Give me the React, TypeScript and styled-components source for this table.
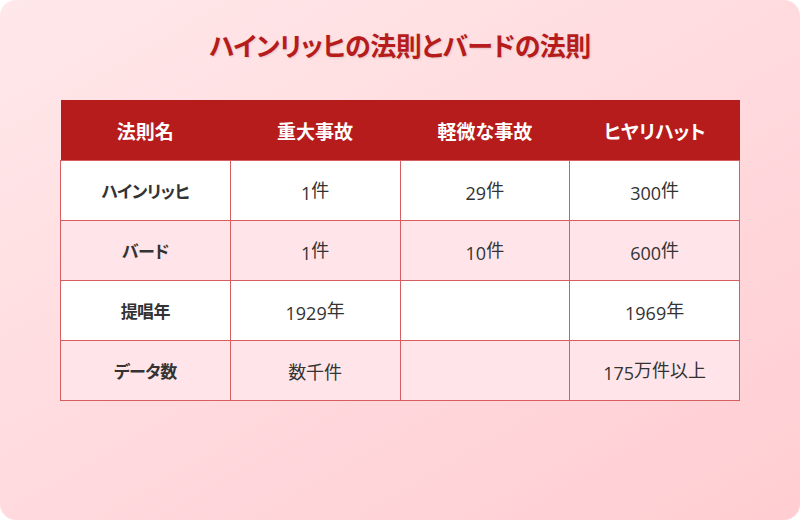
import React from 'react';
import styled, { createGlobalStyle } from 'styled-components';

const GlobalStyle = createGlobalStyle`
  html, body {
    margin: 0;
    padding: 0;
    background: #ffffff;
  }
  body {
    font-family: 'Open Sans', 'Noto Sans CJK JP', sans-serif;
  }
`;

const Card = styled.div`
  width: 800px;
  height: 520px;
  box-sizing: border-box;
  border-radius: 16px;
  background: linear-gradient(150deg, #ffe8ea 0%, #ffd9dd 55%, #ffcdd2 100%);
  padding: 24px 60px;
  display: flex;
  flex-direction: column;
  align-items: stretch;
`;

const Title = styled.h1`
  margin: 0 0 34px;
  height: 42px;
  line-height: 42px;
  text-align: center;
  font-family: 'Noto Sans CJK JP', sans-serif;
  font-feature-settings: 'palt';
  font-size: 26px;
  letter-spacing: -0.5px;
  font-weight: 700;
  color: #b71c1c;
  text-shadow: 1px 1px 2px rgba(0, 0, 0, 0.12);
`;

const Table = styled.table`
  width: 680px;
  border-collapse: collapse;
  table-layout: fixed;
`;

const HeadCell = styled.th`
  height: 60px;
  padding: 0;
  background: #b71c1c;
  color: #ffffff;
  font-family: 'Noto Sans CJK JP', sans-serif;
  font-feature-settings: 'palt';
  font-size: 19px;
  font-weight: 700;
  text-align: center;
`;

const Row = styled.tr<{ $alt?: boolean }>`
  background: ${(p) => (p.$alt ? '#ffe5e9' : '#ffffff')};
`;

const Cell = styled.td<{ $label?: boolean }>`
  height: 59px;
  padding: 0;
  border: 1px solid #d65d60;
  text-align: center;
  color: #333333;
  font-feature-settings: 'palt';
  font-size: ${(p) => (p.$label ? '17px' : '18px')};
  letter-spacing: ${(p) => (p.$label ? '-0.5px' : '0')};
  font-weight: ${(p) => (p.$label ? 700 : 400)};
  font-family: ${(p) =>
    p.$label ? "'Noto Sans CJK JP', sans-serif" : "'Open Sans', 'Noto Sans CJK JP', sans-serif"};
`;

// CJK unit after a number sits a little higher than the digits in the reference
const Unit = styled.span`
  font-family: 'Noto Sans CJK JP', sans-serif;
  vertical-align: 3px;
`;

const headers = ['法則名', '重大事故', '軽微な事故', 'ヒヤリハット'];

const rows = [
  ['ハインリッヒ', '1件', '29件', '300件'],
  ['バード', '1件', '10件', '600件'],
  ['提唱年', '1929年', '', '1969年'],
  ['データ数', '数千件', '', '175万件以上'],
];

const renderValue = (text: string) => {
  const m = text.match(/^(\d+)(.*)$/);
  if (!m) return text;
  return (
    <>
      {m[1]}
      <Unit>{m[2]}</Unit>
    </>
  );
};

const App = () => (
  <>
    <GlobalStyle />
    <Card>
      <Title>ハインリッヒの法則とバードの法則</Title>
      <Table>
        <thead>
          <tr>
            {headers.map((h) => (
              <HeadCell key={h}>{h}</HeadCell>
            ))}
          </tr>
        </thead>
        <tbody>
          {rows.map((r, i) => (
            <Row key={r[0]} $alt={i % 2 === 1}>
              {r.map((c, j) => (
                <Cell key={j} $label={j === 0}>
                  {j === 0 ? c : renderValue(c)}
                </Cell>
              ))}
            </Row>
          ))}
        </tbody>
      </Table>
    </Card>
  </>
);

export default App;
